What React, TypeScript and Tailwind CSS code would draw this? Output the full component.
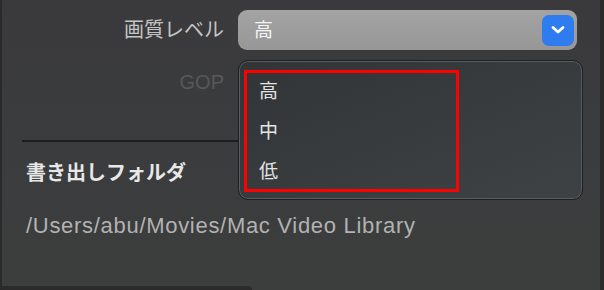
import React from 'react';

const font = { fontFamily: '"Liberation Sans", "Noto Sans CJK JP", sans-serif' };

function Chevron() {
  return (
    <svg width="14" height="10" viewBox="0 0 14 10" fill="none">
      <path d="M2 2.5 L7 7 L12 2.5" stroke="#ffffff" strokeWidth="2.8" strokeLinecap="round" strokeLinejoin="round" />
    </svg>
  );
}

export default function App() {
  const items = ['高', '中', '低'];

  return (
    <div
      className="relative w-[604px] h-[290px] overflow-hidden bg-gradient-to-b from-[#3a3a3c] to-[#3c3e3e] border-l-2 border-r-4 border-l-[#2a2a2a] border-r-[#2b2b2b] flex flex-col"
      style={font}
    >
      {/* 画質レベル */}
      <div className="flex items-center gap-[14px] pt-[10px]">
        <div className="w-[222px] text-right text-[20px] text-[#c4c4c4] leading-none">画質レベル</div>
        <div className="w-[339px] h-[40px] rounded-[9px] bg-gradient-to-b from-[#a3a3a3] to-[#979797] flex items-center justify-between pl-[16px] pr-[3px]">
          <span className="text-[19px] text-[#f4f4f4] leading-none">高</span>
          <div className="w-[32px] h-[31px] rounded-[7px] bg-[#2f7bf0] flex items-center justify-center">
            <Chevron />
          </div>
        </div>
      </div>

      {/* GOP */}
      <div className="flex items-center mt-[12px] h-[40px]">
        <div className="w-[222px] text-right text-[20px] text-[#575859] leading-none">GOP</div>
      </div>

      <div className="mt-[38px] ml-[20px] w-[540px] h-[2px] bg-[#1c1d1e]" />

      <div className="mt-[17px] ml-[24px] h-[28px] flex items-center text-[20px] font-bold text-[#e8e8e8]">
        書き出しフォルダ
      </div>

      <div className="mt-[24px] ml-[24px] h-[28px] flex items-center text-[22px] tracking-[0.7px] text-[#b2b2b2]">
        /Users/abu/Movies/Mac Video Library
      </div>

      <div className="mt-auto w-[250px] h-[4px] bg-[#2b2b2b] rounded-tr-[6px]" />

      {/* dropdown menu */}
      <div className="absolute left-[236px] top-[60px] w-[345px] h-[140px] rounded-[10px] border border-[#1e1f20] bg-gradient-to-br from-[#323538] to-[#3e4245] shadow-[inset_0_0_0_1px_#5a5d60] pt-[10px] pl-[20px]">
        {items.map((item) => (
          <div key={item} className="h-[40px] flex items-center text-[19px] text-[#e4e4e4] leading-none">
            {item}
          </div>
        ))}
      </div>

      {/* highlight */}
      <div className="absolute left-[242px] top-[70px] w-[215px] h-[122px] border-[3px] border-[#ff0000]" />
    </div>
  );
}
